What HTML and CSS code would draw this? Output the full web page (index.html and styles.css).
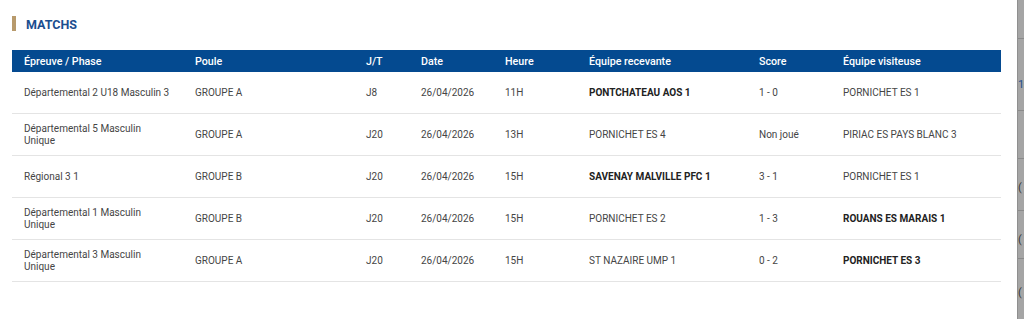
FILE: index.html
```html
<!DOCTYPE html>
<html lang="fr">
<head>
<meta charset="utf-8">
<title>Matchs</title>
<link rel="stylesheet" href="styles.css">
</head>
<body>
<div class="modal">
  <h2 class="title">MATCHS</h2>
  <table class="matches">
    <thead>
      <tr>
        <th class="c-ep">Épreuve / Phase</th>
        <th class="c-po">Poule</th>
        <th class="c-jt">J/T</th>
        <th class="c-da">Date</th>
        <th class="c-he">Heure</th>
        <th class="c-rc">Équipe recevante</th>
        <th class="c-sc">Score</th>
        <th class="c-vi">Équipe visiteuse</th>
      </tr>
    </thead>
    <tbody>
      <tr>
        <td>Départemental 2 U18 Masculin 3</td>
        <td>GROUPE A</td>
        <td>J8</td>
        <td>26/04/2026</td>
        <td>11H</td>
        <td class="win">PONTCHATEAU AOS 1</td>
        <td>1 - 0</td>
        <td>PORNICHET ES 1</td>
      </tr>
      <tr>
        <td>Départemental 5 Masculin<br>Unique</td>
        <td>GROUPE A</td>
        <td>J20</td>
        <td>26/04/2026</td>
        <td>13H</td>
        <td>PORNICHET ES 4</td>
        <td>Non joué</td>
        <td>PIRIAC ES PAYS BLANC 3</td>
      </tr>
      <tr>
        <td>Régional 3 1</td>
        <td>GROUPE B</td>
        <td>J20</td>
        <td>26/04/2026</td>
        <td>15H</td>
        <td class="win">SAVENAY MALVILLE PFC 1</td>
        <td>3 - 1</td>
        <td>PORNICHET ES 1</td>
      </tr>
      <tr>
        <td>Départemental 1 Masculin<br>Unique</td>
        <td>GROUPE B</td>
        <td>J20</td>
        <td>26/04/2026</td>
        <td>15H</td>
        <td>PORNICHET ES 2</td>
        <td>1 - 3</td>
        <td class="win">ROUANS ES MARAIS 1</td>
      </tr>
      <tr>
        <td>Départemental 3 Masculin<br>Unique</td>
        <td>GROUPE A</td>
        <td>J20</td>
        <td>26/04/2026</td>
        <td>15H</td>
        <td>ST NAZAIRE UMP 1</td>
        <td>0 - 2</td>
        <td class="win">PORNICHET ES 3</td>
      </tr>
    </tbody>
  </table>
</div>
<div class="backdrop">
  <span class="bd-line l1"></span>
  <span class="bd-line l2"></span>
  <span class="bd-line l3"></span>
  <span class="bd-line l4"></span>
  <span class="bd-line l5"></span>
  <span class="bd-text blue t1">1</span>
  <span class="bd-text t2">(</span>
  <span class="bd-text t3">(</span>
  <span class="bd-text t4">(</span>
</div>
</body>
</html>
```

FILE: styles.css
```css
html, body {
  margin: 0;
  padding: 0;
  background: #ffffff;
  font-family: Roboto, "Liberation Sans", Arial, sans-serif;
  overflow: hidden;
}

.modal {
  width: 1018px;
  height: 319px;
  box-sizing: border-box;
  padding: 16px 17px 0 12px;
  background: #ffffff;
}

.title {
  margin: 0 0 19px 0;
  height: 15px;
  border-left: 4px solid #b89a6c;
  padding-left: 10px;
  font-size: 12.5px;
  line-height: 17px;
  font-weight: 700;
  color: #1b4e8f;
}

.matches {
  width: 989px;
  border-collapse: collapse;
  table-layout: fixed;
  font-size: 10px;
  color: #454545;
}

.matches thead tr {
  background: #044a90;
}

.matches th {
  height: 22px;
  padding: 0 0 0 12px;
  text-align: left;
  font-weight: 500;
  font-size: 10.7px;
  color: #ffffff;
  white-space: nowrap;
}

.c-ep { width: 159px; }
.c-po { width: 159px; }
.c-jt { width: 43px; }
.c-da { width: 72px; }
.c-he { width: 72px; }
.c-rc { width: 158px; }
.c-sc { width: 72px; }

.matches td {
  height: 41px;
  padding: 0 0 0 12px;
  border-bottom: 1px solid #e4e4e4;
  vertical-align: middle;
  line-height: 12px;
}

.matches td.win {
  font-weight: 700;
  color: #222222;
}

.backdrop {
  position: absolute;
  top: 0;
  left: 1017px;
  width: 7px;
  height: 319px;
  background: #a5a5a5;
  border-left: 1px solid #8f8f8f;
  box-sizing: border-box;
  overflow: hidden;
}

.bd-line {
  position: absolute;
  left: 0;
  width: 7px;
  height: 1px;
  background: #8a8a8a;
}

.l1 { top: 38px; }
.l2 { top: 110px; }
.l3 { top: 158px; }
.l4 { top: 210px; }
.l5 { top: 258px; }

.bd-text {
  position: absolute;
  left: 0;
  font-size: 11px;
  line-height: 12px;
  color: #3a3a3a;
}

.bd-text.blue { color: #1f4f8c; }
.t1 { top: 79px; }
.t2 { top: 182px; }
.t3 { top: 234px; }
.t4 { top: 287px; }
```
